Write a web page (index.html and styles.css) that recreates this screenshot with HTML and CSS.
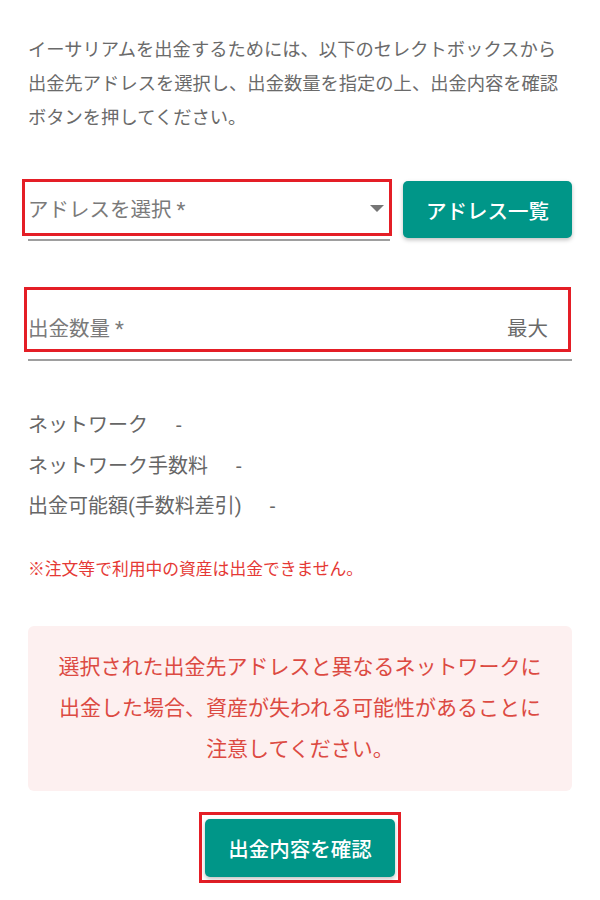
FILE: index.html
```html
<!DOCTYPE html>
<html lang="ja">
<head>
    <meta charset="UTF-8">
    <meta name="viewport" content="width=device-width, initial-scale=1.0">
    <title>出金</title>
    <link rel="stylesheet" href="styles.css">
</head>
<body>
    <div class="container">
        <p class="intro">イーサリアムを出金するためには、以下のセレクトボックスから<br>出金先アドレスを選択し、出金数量を指定の上、出金内容を確認<br>ボタンを押してください。</p>

        <div class="address-row">
            <div class="select-field">
                <span class="field-label">アドレスを選択 *</span>
                <span class="arrow"></span>
                <span class="mark mark-select"></span>
            </div>
            <button class="btn btn-list">アドレス一覧</button>
        </div>

        <div class="amount-field">
            <span class="field-label">出金数量 *</span>
            <span class="max">最大</span>
            <span class="mark mark-amount"></span>
        </div>

        <ul class="info">
            <li>ネットワーク<span class="value">-</span></li>
            <li>ネットワーク手数料<span class="value">-</span></li>
            <li>出金可能額(手数料差引)<span class="value">-</span></li>
        </ul>

        <p class="note">※注文等で利用中の資産は出金できません。</p>

        <div class="warning">
            選択された出金先アドレスと異なるネットワークに<br>
            出金した場合、資産が失われる可能性があることに<br>
            注意してください。
        </div>

        <div class="submit">
            <div class="submit-mark">
                <button class="btn btn-confirm">出金内容を確認</button>
            </div>
        </div>
    </div>
</body>
</html>
```

FILE: styles.css
```css
* {
    margin: 0;
    padding: 0;
    box-sizing: border-box;
    font-family: 'Roboto', 'Noto Sans CJK JP', sans-serif;
}

body {
    background: #ffffff;
    color: #666666;
}

.container {
    padding: 33px 28px 0;
}

.intro {
    font-size: 18.3px;
    line-height: 34px;
    color: #6a6a6a;
    white-space: nowrap;
}

.address-row {
    display: flex;
    gap: 13px;
    margin-top: 45px;
}

.select-field {
    position: relative;
    width: 362px;
    height: 61px;
    display: flex;
    align-items: center;
    padding-bottom: 3px;
    border-bottom: 2px solid #9e9e9e;
}

.field-label {
    font-size: 20.5px;
    color: #7a7a7a;
}

.arrow {
    margin-left: auto;
    margin-right: 6px;
    width: 0;
    height: 0;
    border-left: 7px solid transparent;
    border-right: 7px solid transparent;
    border-top: 7px solid #757575;
}

.mark {
    position: absolute;
    border: 3px solid #e41e26;
    pointer-events: none;
}

.mark-select {
    left: -6px;
    top: -1px;
    right: -2px;
    bottom: 3px;
}

.btn {
    border: none;
    background: #009688;
    color: #ffffff;
    border-radius: 5px;
    font-size: 20.5px;
    font-weight: 500;
    cursor: pointer;
    box-shadow: 0 2px 4px rgba(0, 0, 0, 0.25);
}

.btn-list {
    width: 169px;
    height: 57px;
    margin-top: 1px;
}

.amount-field {
    position: relative;
    margin-top: 46px;
    height: 74px;
    display: flex;
    align-items: center;
    padding-top: 8px;
    border-bottom: 2px solid #9e9e9e;
}

.mark-amount {
    left: -4px;
    top: 0;
    right: 1px;
    bottom: 7px;
}

.max {
    margin-left: auto;
    margin-right: 24px;
    font-size: 20.5px;
    color: #6a6a6a;
}

.info {
    list-style: none;
    margin-top: 44px;
    font-size: 20px;
    line-height: 40.5px;
    color: #666666;
}

.value {
    margin-left: 28px;
}

.note {
    margin-top: 30px;
    font-size: 16.8px;
    line-height: 24px;
    color: #e53935;
}

.warning {
    margin-top: 45px;
    padding: 21px 16px;
    background: #fdf0f0;
    border-radius: 6px;
    text-align: center;
    font-size: 21px;
    line-height: 41px;
    color: #dc4a42;
}

.submit {
    display: flex;
    justify-content: center;
    margin-top: 21px;
}

.submit-mark {
    border: 3px solid #e41e26;
    padding: 4px 3px 3px;
}

.btn-confirm {
    display: block;
    width: 190px;
    height: 58px;
}
```
